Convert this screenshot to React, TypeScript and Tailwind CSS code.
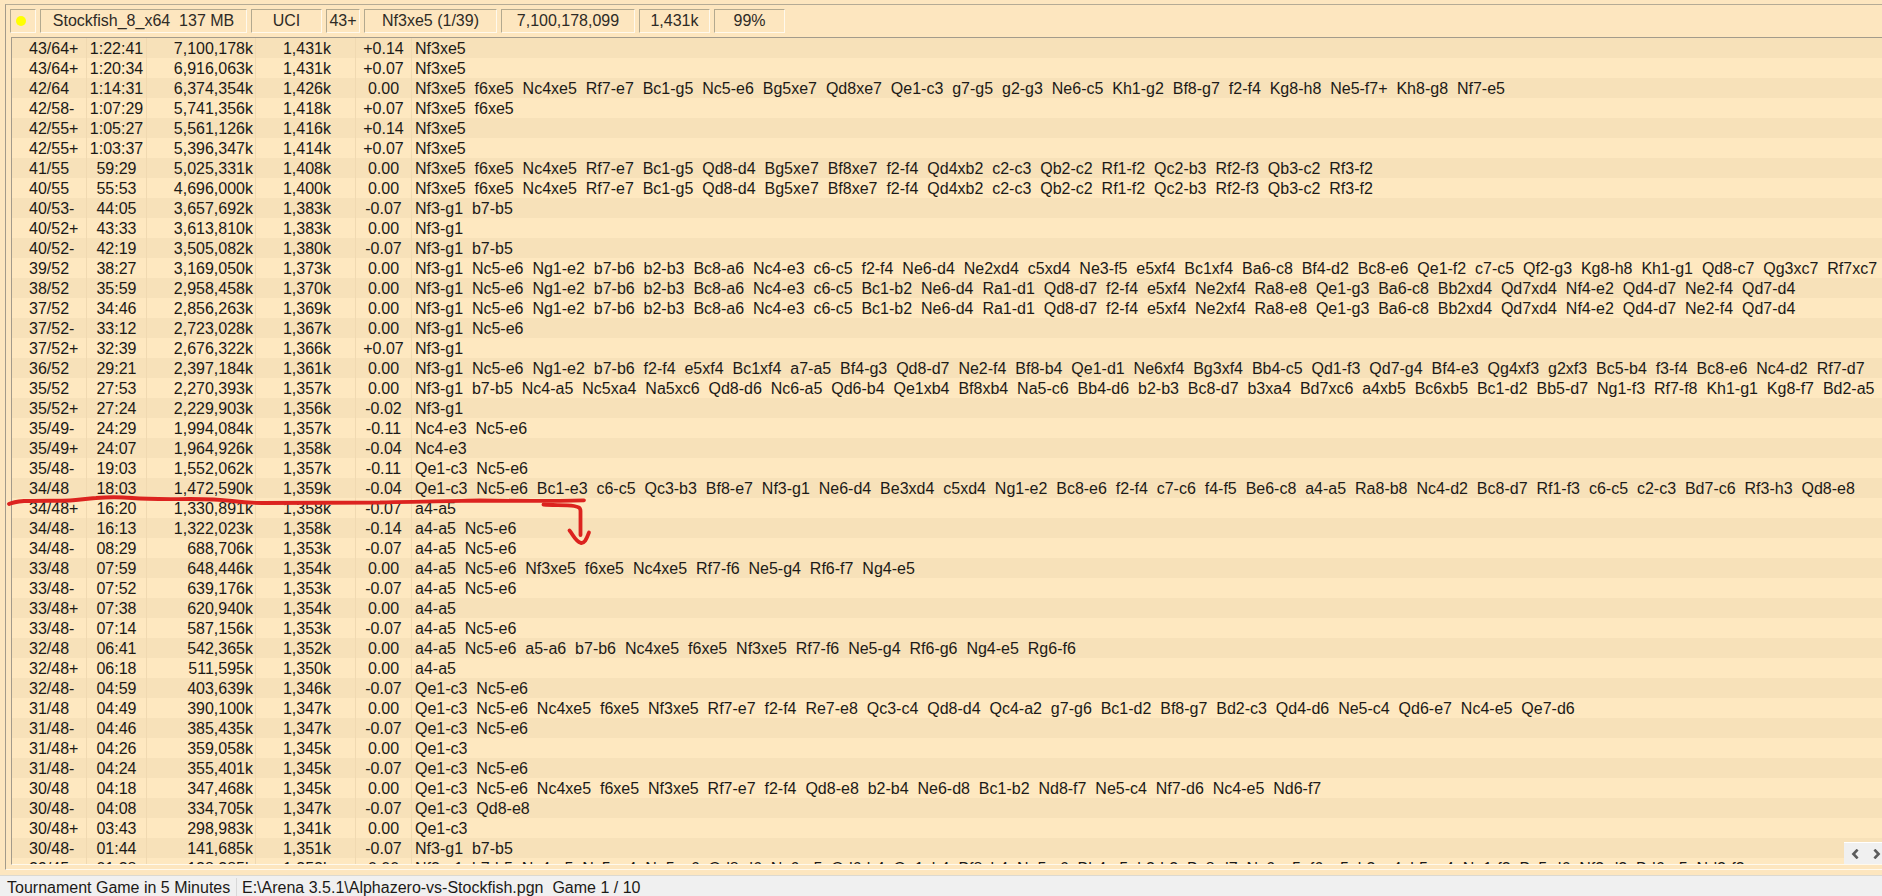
import React from "react";

type Line = [depth: string, time: string, nodes: string, nps: string, score: string, moves: string];

const lines: Line[] = [
  ["43/64+", "1:22:41", "7,100,178k", "1,431k", "+0.14", "Nf3xe5"],
  ["43/64+", "1:20:34", "6,916,063k", "1,431k", "+0.07", "Nf3xe5"],
  ["42/64", "1:14:31", "6,374,354k", "1,426k", "0.00", "Nf3xe5 f6xe5 Nc4xe5 Rf7-e7 Bc1-g5 Nc5-e6 Bg5xe7 Qd8xe7 Qe1-c3 g7-g5 g2-g3 Ne6-c5 Kh1-g2 Bf8-g7 f2-f4 Kg8-h8 Ne5-f7+ Kh8-g8 Nf7-e5"],
  ["42/58-", "1:07:29", "5,741,356k", "1,418k", "+0.07", "Nf3xe5 f6xe5"],
  ["42/55+", "1:05:27", "5,561,126k", "1,416k", "+0.14", "Nf3xe5"],
  ["42/55+", "1:03:37", "5,396,347k", "1,414k", "+0.07", "Nf3xe5"],
  ["41/55", "59:29", "5,025,331k", "1,408k", "0.00", "Nf3xe5 f6xe5 Nc4xe5 Rf7-e7 Bc1-g5 Qd8-d4 Bg5xe7 Bf8xe7 f2-f4 Qd4xb2 c2-c3 Qb2-c2 Rf1-f2 Qc2-b3 Rf2-f3 Qb3-c2 Rf3-f2"],
  ["40/55", "55:53", "4,696,000k", "1,400k", "0.00", "Nf3xe5 f6xe5 Nc4xe5 Rf7-e7 Bc1-g5 Qd8-d4 Bg5xe7 Bf8xe7 f2-f4 Qd4xb2 c2-c3 Qb2-c2 Rf1-f2 Qc2-b3 Rf2-f3 Qb3-c2 Rf3-f2"],
  ["40/53-", "44:05", "3,657,692k", "1,383k", "-0.07", "Nf3-g1 b7-b5"],
  ["40/52+", "43:33", "3,613,810k", "1,383k", "0.00", "Nf3-g1"],
  ["40/52-", "42:19", "3,505,082k", "1,380k", "-0.07", "Nf3-g1 b7-b5"],
  ["39/52", "38:27", "3,169,050k", "1,373k", "0.00", "Nf3-g1 Nc5-e6 Ng1-e2 b7-b6 b2-b3 Bc8-a6 Nc4-e3 c6-c5 f2-f4 Ne6-d4 Ne2xd4 c5xd4 Ne3-f5 e5xf4 Bc1xf4 Ba6-c8 Bf4-d2 Bc8-e6 Qe1-f2 c7-c5 Qf2-g3 Kg8-h8 Kh1-g1 Qd8-c7 Qg3xc7 Rf7xc7"],
  ["38/52", "35:59", "2,958,458k", "1,370k", "0.00", "Nf3-g1 Nc5-e6 Ng1-e2 b7-b6 b2-b3 Bc8-a6 Nc4-e3 c6-c5 Bc1-b2 Ne6-d4 Ra1-d1 Qd8-d7 f2-f4 e5xf4 Ne2xf4 Ra8-e8 Qe1-g3 Ba6-c8 Bb2xd4 Qd7xd4 Nf4-e2 Qd4-d7 Ne2-f4 Qd7-d4"],
  ["37/52", "34:46", "2,856,263k", "1,369k", "0.00", "Nf3-g1 Nc5-e6 Ng1-e2 b7-b6 b2-b3 Bc8-a6 Nc4-e3 c6-c5 Bc1-b2 Ne6-d4 Ra1-d1 Qd8-d7 f2-f4 e5xf4 Ne2xf4 Ra8-e8 Qe1-g3 Ba6-c8 Bb2xd4 Qd7xd4 Nf4-e2 Qd4-d7 Ne2-f4 Qd7-d4"],
  ["37/52-", "33:12", "2,723,028k", "1,367k", "0.00", "Nf3-g1 Nc5-e6"],
  ["37/52+", "32:39", "2,676,322k", "1,366k", "+0.07", "Nf3-g1"],
  ["36/52", "29:21", "2,397,184k", "1,361k", "0.00", "Nf3-g1 Nc5-e6 Ng1-e2 b7-b6 f2-f4 e5xf4 Bc1xf4 a7-a5 Bf4-g3 Qd8-d7 Ne2-f4 Bf8-b4 Qe1-d1 Ne6xf4 Bg3xf4 Bb4-c5 Qd1-f3 Qd7-g4 Bf4-e3 Qg4xf3 g2xf3 Bc5-b4 f3-f4 Bc8-e6 Nc4-d2 Rf7-d7"],
  ["35/52", "27:53", "2,270,393k", "1,357k", "0.00", "Nf3-g1 b7-b5 Nc4-a5 Nc5xa4 Na5xc6 Qd8-d6 Nc6-a5 Qd6-b4 Qe1xb4 Bf8xb4 Na5-c6 Bb4-d6 b2-b3 Bc8-d7 b3xa4 Bd7xc6 a4xb5 Bc6xb5 Bc1-d2 Bb5-d7 Ng1-f3 Rf7-f8 Kh1-g1 Kg8-f7 Bd2-a5"],
  ["35/52+", "27:24", "2,229,903k", "1,356k", "-0.02", "Nf3-g1"],
  ["35/49-", "24:29", "1,994,084k", "1,357k", "-0.11", "Nc4-e3 Nc5-e6"],
  ["35/49+", "24:07", "1,964,926k", "1,358k", "-0.04", "Nc4-e3"],
  ["35/48-", "19:03", "1,552,062k", "1,357k", "-0.11", "Qe1-c3 Nc5-e6"],
  ["34/48", "18:03", "1,472,590k", "1,359k", "-0.04", "Qe1-c3 Nc5-e6 Bc1-e3 c6-c5 Qc3-b3 Bf8-e7 Nf3-g1 Ne6-d4 Be3xd4 c5xd4 Ng1-e2 Bc8-e6 f2-f4 c7-c6 f4-f5 Be6-c8 a4-a5 Ra8-b8 Nc4-d2 Bc8-d7 Rf1-f3 c6-c5 c2-c3 Bd7-c6 Rf3-h3 Qd8-e8"],
  ["34/48+", "16:20", "1,330,891k", "1,358k", "-0.07", "a4-a5"],
  ["34/48-", "16:13", "1,322,023k", "1,358k", "-0.14", "a4-a5 Nc5-e6"],
  ["34/48-", "08:29", "688,706k", "1,353k", "-0.07", "a4-a5 Nc5-e6"],
  ["33/48", "07:59", "648,446k", "1,354k", "0.00", "a4-a5 Nc5-e6 Nf3xe5 f6xe5 Nc4xe5 Rf7-f6 Ne5-g4 Rf6-f7 Ng4-e5"],
  ["33/48-", "07:52", "639,176k", "1,353k", "-0.07", "a4-a5 Nc5-e6"],
  ["33/48+", "07:38", "620,940k", "1,354k", "0.00", "a4-a5"],
  ["33/48-", "07:14", "587,156k", "1,353k", "-0.07", "a4-a5 Nc5-e6"],
  ["32/48", "06:41", "542,365k", "1,352k", "0.00", "a4-a5 Nc5-e6 a5-a6 b7-b6 Nc4xe5 f6xe5 Nf3xe5 Rf7-f6 Ne5-g4 Rf6-g6 Ng4-e5 Rg6-f6"],
  ["32/48+", "06:18", "511,595k", "1,350k", "0.00", "a4-a5"],
  ["32/48-", "04:59", "403,639k", "1,346k", "-0.07", "Qe1-c3 Nc5-e6"],
  ["31/48", "04:49", "390,100k", "1,347k", "0.00", "Qe1-c3 Nc5-e6 Nc4xe5 f6xe5 Nf3xe5 Rf7-e7 f2-f4 Re7-e8 Qc3-c4 Qd8-d4 Qc4-a2 g7-g6 Bc1-d2 Bf8-g7 Bd2-c3 Qd4-d6 Ne5-c4 Qd6-e7 Nc4-e5 Qe7-d6"],
  ["31/48-", "04:46", "385,435k", "1,347k", "-0.07", "Qe1-c3 Nc5-e6"],
  ["31/48+", "04:26", "359,058k", "1,345k", "0.00", "Qe1-c3"],
  ["31/48-", "04:24", "355,401k", "1,345k", "-0.07", "Qe1-c3 Nc5-e6"],
  ["30/48", "04:18", "347,468k", "1,345k", "0.00", "Qe1-c3 Nc5-e6 Nc4xe5 f6xe5 Nf3xe5 Rf7-e7 f2-f4 Qd8-e8 b2-b4 Ne6-d8 Bc1-b2 Nd8-f7 Ne5-c4 Nf7-d6 Nc4-e5 Nd6-f7"],
  ["30/48-", "04:08", "334,705k", "1,347k", "-0.07", "Qe1-c3 Qd8-e8"],
  ["30/48+", "03:43", "298,983k", "1,341k", "0.00", "Qe1-c3"],
  ["30/48-", "01:44", "141,685k", "1,351k", "-0.07", "Nf3-g1 b7-b5"],
  ["29/45", "01:38", "128,385k", "1,352k", "0.00", "Nf3-g1 b7-b5 Nc4-a5 Nc5xa4 Na5xc6 Qd8-d6 Nc6-a5 Qd6-b4 Qe1xb4 Bf8xb4 Na5-c6 Bb4-c5 b2-b3 Bc8-d7 Nc6xe5 f6xe5 b3xa4 b5xa4 Ng1-f3 Bc5-d6 Nf3-d2 Bd6-e5 Nd2-f3"],
];

function Panel({ width, children }: { width: string; children: React.ReactNode }) {
  return (
    <div
      className={`${width} flex h-6 shrink-0 items-center justify-center whitespace-pre border border-t-[#b3a98f] border-r-[#fff9ec] border-b-[#fff9ec] border-l-[#b3a98f] text-[#2e2b26]`}
    >
      {children}
    </div>
  );
}

function EngineHeader() {
  return (
    <header className="flex h-8 shrink-0 gap-1 pt-1 pl-1">
      <Panel width="w-[26px]">
        <svg className="mr-1 h-3 w-3" viewBox="0 0 12 12" role="img" aria-label="Thinking">
          <circle cx="6" cy="6" r="5" fill="#ffff00" />
        </svg>
      </Panel>
      <Panel width="w-[207px]">{"Stockfish_8_x64  137 MB"}</Panel>
      <Panel width="w-[71px]">UCI</Panel>
      <Panel width="w-[34px]">43+</Panel>
      <Panel width="w-[133px]">Nf3xe5 (1/39)</Panel>
      <Panel width="w-[134px]">7,100,178,099</Panel>
      <Panel width="w-[71px]">1,431k</Panel>
      <Panel width="w-[71px]">99%</Panel>
    </header>
  );
}

function AnalysisTable() {
  return (
    <table className="w-full table-fixed border-separate border-spacing-0 leading-[18px]" aria-label="Analysis lines">
      <colgroup>
        <col className="w-[75px]" />
        <col className="w-[60px]" />
        <col className="w-[109px]" />
        <col className="w-[100px]" />
        <col className="w-[56px]" />
        <col />
      </colgroup>
      <tbody>
        {lines.map(([depth, time, nodes, nps, score, moves], i) => (
          <tr key={i} className="h-5 odd:bg-[#f7e1b9] even:bg-[#fee8c0] [&>td]:border-[#f0d9b1] [&>td]:pt-[2px] [&>td]:whitespace-pre">
            <td className="border-r pl-[17px]">{depth}</td>
            <td className="border-r text-center">{time}</td>
            <td className="border-r pr-[2px] text-right">{nodes}</td>
            <td className="border-r pr-6 text-right">{nps}</td>
            <td className="border-r text-center">{score}</td>
            <td className="overflow-hidden pl-[3px]">{moves.split(" ").join("  ")}</td>
          </tr>
        ))}
      </tbody>
    </table>
  );
}

function ScrollButtons() {
  return (
    <div className="absolute right-0 bottom-0 flex h-[22px] w-[38px] overflow-hidden border-t border-white bg-[#f0f0f0]">
      <button type="button" aria-label="Scroll left" className="flex w-[22px] shrink-0 items-center justify-center">
        <svg className="h-[10px] w-2" viewBox="0 0 8 10" fill="none" stroke="#5c5c5c" strokeWidth="2.6">
          <path d="M6.6 0.6 L2.4 5 L6.6 9.4" />
        </svg>
      </button>
      <button type="button" aria-label="Scroll right" className="flex w-[22px] shrink-0 items-center justify-center">
        <svg className="h-[10px] w-2" viewBox="0 0 8 10" fill="none" stroke="#5c5c5c" strokeWidth="2.6">
          <path d="M1.4 0.6 L5.6 5 L1.4 9.4" />
        </svg>
      </button>
    </div>
  );
}

function PenMark() {
  return (
    <svg
      className="pointer-events-none absolute top-[490px] left-0 h-[60px] w-[600px]"
      viewBox="0 490 600 60"
      fill="none"
      stroke="#dc231f"
      strokeWidth="3.8"
      strokeLinecap="round"
      strokeLinejoin="round"
      aria-hidden="true"
    >
      <path d="M9 504 C13 502 18 501.5 24 501 C42 500.5 58 501 70 500.5 C80 500 86 498.5 96 498 C108 497 120 497 132 498 C150 499.5 170 499 190 499 C208 499 220 499.5 232 501 C244 502.5 252 503 262 503 C300 502.5 340 503 380 502.5 C410 501.5 450 501 480 500.5 C520 501 555 501 584 500.3" />
      <path d="M543.5 504.5 C553 505.5 566 504.5 574 506 C579 507 580.5 507.5 580.5 511 L580.5 535" />
      <path d="M569.5 530.5 C573 534.5 575 541 581 543 C585.5 543.5 587 537 589 532.5" />
    </svg>
  );
}

export default function App() {
  return (
    <div className="relative flex h-screen flex-col overflow-hidden bg-[#fde6bf] font-['Liberation_Sans',Arial,sans-serif] text-base leading-5 text-[#1c1a17]">
      <main className="mt-1 mb-[5px] ml-[5px] flex min-h-0 flex-1 flex-col border border-r-0 border-t-[#b5ab95] border-b-[#fff9ec] border-l-[#a39b8b]">
        <EngineHeader />
        <section className="relative mb-1 ml-[5px] min-h-0 flex-1 overflow-hidden border border-r-0 border-t-[#a39b8b] border-b-[#fff9ec] border-l-[#a39b8b]">
          <AnalysisTable />
          <ScrollButtons />
        </section>
      </main>
      <footer className="flex h-[21px] shrink-0 border-t border-[#dcd9d0] bg-[#f0f0f0] whitespace-pre">
        <div className="mt-[2px] w-[237px] border-r border-[#d8d8d8] pl-[7px]">Tournament Game in 5 Minutes</div>
        <div className="mt-[2px] pl-[5px]">{"E:\\Arena 3.5.1\\Alphazero-vs-Stockfish.pgn  Game 1 / 10"}</div>
      </footer>
      <PenMark />
    </div>
  );
}
